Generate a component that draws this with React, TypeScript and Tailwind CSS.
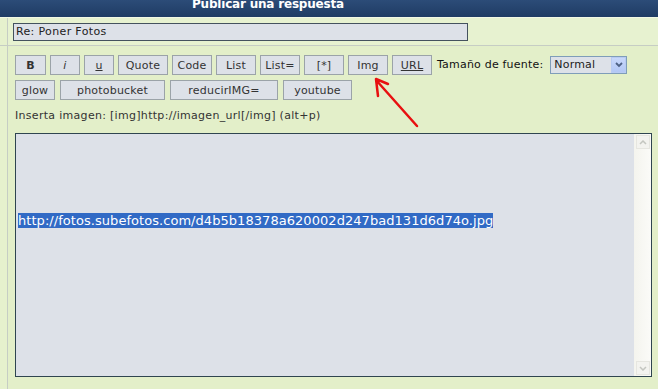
import React from 'react'

const font = { fontFamily: '"DejaVu Sans", Verdana, sans-serif' }

function Btn({ w, children, className = '' }: { w: string; children: React.ReactNode; className?: string }) {
  return (
    <div
      className={`${w} h-[20px] flex items-center justify-center border border-[#9ba3a8] bg-[#dde1e8] text-[11px] tracking-[0.2px] text-[#333] leading-none ${className}`}
    >
      {children}
    </div>
  )
}

export default function App() {
  return (
    <div className="relative w-[658px] h-[389px] overflow-hidden bg-[#e3efc9] flex flex-col" style={font}>
      {/* header */}
      <div className="h-[17px] bg-gradient-to-b from-[#2c4c78] to-[#1f3c64] overflow-hidden shrink-0">
        <div className="pl-[192px] -mt-[4px] text-white font-bold text-[12px] tracking-[-0.2px] leading-[16px] whitespace-nowrap">
          Publicar una respuesta
        </div>
      </div>
      <div className="h-px bg-[#f2f8e4] shrink-0" />

      {/* subject row */}
      <div className="flex h-[28px] border-b border-[#c6cdc4] shrink-0">
        <div className="w-[8px] border-r border-[#c6cdc4] bg-[#e6f1cd]" />
        <div className="flex-1 pl-[5px] pt-[5px] bg-[#e7f2d0]">
          <div className="w-[455px] h-[18px] border border-[#44525e] bg-[#dde1e8] text-[11px] tracking-[0.35px] text-[#222] pl-[2px] flex items-center">
            Re: Poner Fotos
          </div>
        </div>
      </div>

      {/* body row */}
      <div className="flex flex-1">
        <div className="w-[8px] border-r border-[#c6cdc4] bg-[#e6f1cd]" />
        <div className="flex-1 flex flex-col pl-[7px] pt-[9px]">
          <div className="flex items-center gap-[4px]">
            <Btn w="w-[31px]" className="font-bold">B</Btn>
            <Btn w="w-[30px]" className="italic">i</Btn>
            <Btn w="w-[30px]" className="underline">u</Btn>
            <Btn w="w-[50px]">Quote</Btn>
            <Btn w="w-[40px]">Code</Btn>
            <Btn w="w-[40px]">List</Btn>
            <Btn w="w-[40px]">List=</Btn>
            <Btn w="w-[40px]">[*]</Btn>
            <Btn w="w-[40px]">Img</Btn>
            <Btn w="w-[40px]" className="underline">URL</Btn>
            <span className="ml-[1px] text-[11px] tracking-[0.2px] text-[#111]">Tamaño de fuente:</span>
            <div className="ml-[3px] w-[77px] h-[18px] border border-[#7f9db9] bg-[#dde1e8] flex items-center">
              <span className="flex-1 pl-[3px] text-[11px] tracking-[0.2px] text-[#222]">Normal</span>
              <div className="w-[15px] h-[16px] bg-gradient-to-b from-[#c8d8fb] to-[#b2c7f5] border border-[#b8cbf2] flex items-center justify-center">
                <svg width="8" height="6" viewBox="0 0 8 6">
                  <path d="M1 1 L4 4 L7 1" fill="none" stroke="#4d6185" strokeWidth="1.8" />
                </svg>
              </div>
            </div>
          </div>
          <div className="flex items-center gap-[5px] mt-[5px]">
            <Btn w="w-[40px]">glow</Btn>
            <Btn w="w-[105px]">photobucket</Btn>
            <Btn w="w-[108px]">reducirIMG=</Btn>
            <Btn w="w-[69px]">youtube</Btn>
          </div>
          <div className="mt-[9px] text-[11px] tracking-[0.3px] text-[#333] leading-[13px] whitespace-nowrap">
            Inserta imagen: [img]http://imagen_url[/img] (alt+p)
          </div>

          {/* textarea */}
          <div className="mt-[11px] w-[637px] h-[244px] border border-[#2f4550] flex">
            <div className="flex-1 bg-[#dde1e8] pl-[2px] pt-[74px]">
              <span className="bg-[#316ac5] text-white text-[13px] tracking-[0.05px] leading-[15px] inline-block whitespace-nowrap">
                http://fotos.subefotos.com/d4b5b18378a620002d247bad131d6d74o.jpg
              </span>
            </div>
            <div className="w-[17px] bg-gradient-to-r from-[#f4f4ee] to-[#fbfbf8] flex flex-col justify-between items-center py-[1px]">
              <div className="w-[14px] h-[14px] border border-[#e6e6e0] bg-[#f3f3ef] flex items-center justify-center">
                <svg width="8" height="5" viewBox="0 0 8 5">
                  <path d="M1 4 L4 1 L7 4" fill="none" stroke="#c4c6c0" strokeWidth="1.5" />
                </svg>
              </div>
              <div className="w-[14px] h-[14px] border border-[#e6e6e0] bg-[#f3f3ef] flex items-center justify-center">
                <svg width="8" height="5" viewBox="0 0 8 5">
                  <path d="M1 1 L4 4 L7 1" fill="none" stroke="#c4c6c0" strokeWidth="1.5" />
                </svg>
              </div>
            </div>
          </div>
        </div>
      </div>

      {/* red annotation arrow */}
      <svg className="absolute left-0 top-0 pointer-events-none" width="658" height="389">
        <path d="M417 126 L376 80 M376 79 L378 96 M376 79 L388 84" fill="none" stroke="#e81010" strokeWidth="2.5" strokeLinecap="round" />
      </svg>
    </div>
  )
}
